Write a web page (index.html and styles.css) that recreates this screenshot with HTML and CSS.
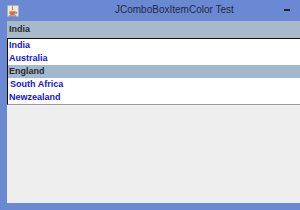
FILE: index.html
```html
<!DOCTYPE html>
<html lang="en">
<head>
    <meta charset="UTF-8">
    <title>JComboBoxItemColor Test</title>
    <link rel="stylesheet" href="styles.css">
</head>
<body>

    <!-- Ventana -->
    <div class="window">
        <div class="title-bar">
            <svg class="app-icon" width="12" height="12" viewBox="0 0 11 11">
                <rect x="0.3" y="0.3" width="10.4" height="10.4" fill="#ece8e0" stroke="#a8a098" stroke-width="0.6"/>
                <path d="M5 1.2 C4 2.6 6 3.2 5 4.6" stroke="#d8602a" stroke-width="0.9" fill="none"/>
                <path d="M2.2 5.8 H7.8 V7.4 C7.8 8.9 6.4 9.4 5 9.4 C3.6 9.4 2.2 8.9 2.2 7.4 Z" fill="#e07030"/>
                <path d="M7.8 6.3 C9.4 6.3 9.4 8 7.8 8" stroke="#5070b0" stroke-width="0.8" fill="none"/>
                <rect x="1.6" y="9.6" width="7" height="0.8" fill="#5070b0"/>
            </svg>
            <span class="title">JComboBoxItemColor Test</span>
            <span class="min-btn"></span>
        </div>

        <div class="content">
            <div class="combo">India</div>
            <ul class="combo-list">
                <li>India</li>
                <li>Australia</li>
                <li class="selected">England</li>
                <li class="indent">South Africa</li>
                <li>Newzealand</li>
            </ul>
        </div>
    </div>

</body>
</html>
```

FILE: styles.css
```css
/* Estilos generales */
body {
    margin: 0;
    padding: 0;
    font-family: "Liberation Sans", Arial, sans-serif;
}

.window {
    width: 300px;
    height: 210px;
    background-color: #6b89d2;
    display: flex;
    flex-direction: column;
}

/* Barra de titulo */
.title-bar {
    height: 21px;
    flex: none;
    display: flex;
    align-items: center;
    position: relative;
    padding-left: 7px;
}

.app-icon {
    display: block;
    margin-top: 1px;
}

.title {
    position: absolute;
    left: 115px;
    top: 4px;
    font-size: 10px;
    color: #1e2a44;
}

.min-btn {
    position: absolute;
    left: 284px;
    top: 9px;
    width: 6px;
    height: 2px;
    background-color: #1c2438;
}

/* Contenido */
.content {
    flex: 1;
    margin: 0 0 7px 7px;
    background-color: #eeeeee;
}

.combo {
    height: 17px;
    line-height: 17px;
    padding-left: 2px;
    font-size: 9px;
    font-weight: bold;
    color: #2a2a2a;
    background-color: #a9b9cc;
}

.combo-list {
    list-style: none;
    margin: 0;
    padding: 0;
    background-color: #ffffff;
    border-top: 1px solid #101010;
    border-left: 1px solid #101010;
    border-bottom: 1px solid #9a9a9a;
}

.combo-list li {
    height: 13px;
    line-height: 13px;
    padding-left: 1px;
    font-size: 9px;
    font-weight: bold;
    color: #1414d8;
}

.combo-list li.selected {
    background-color: #a3b8cf;
    color: #2a2a2a;
}

.combo-list li.indent {
    padding-left: 2px;
}
```
